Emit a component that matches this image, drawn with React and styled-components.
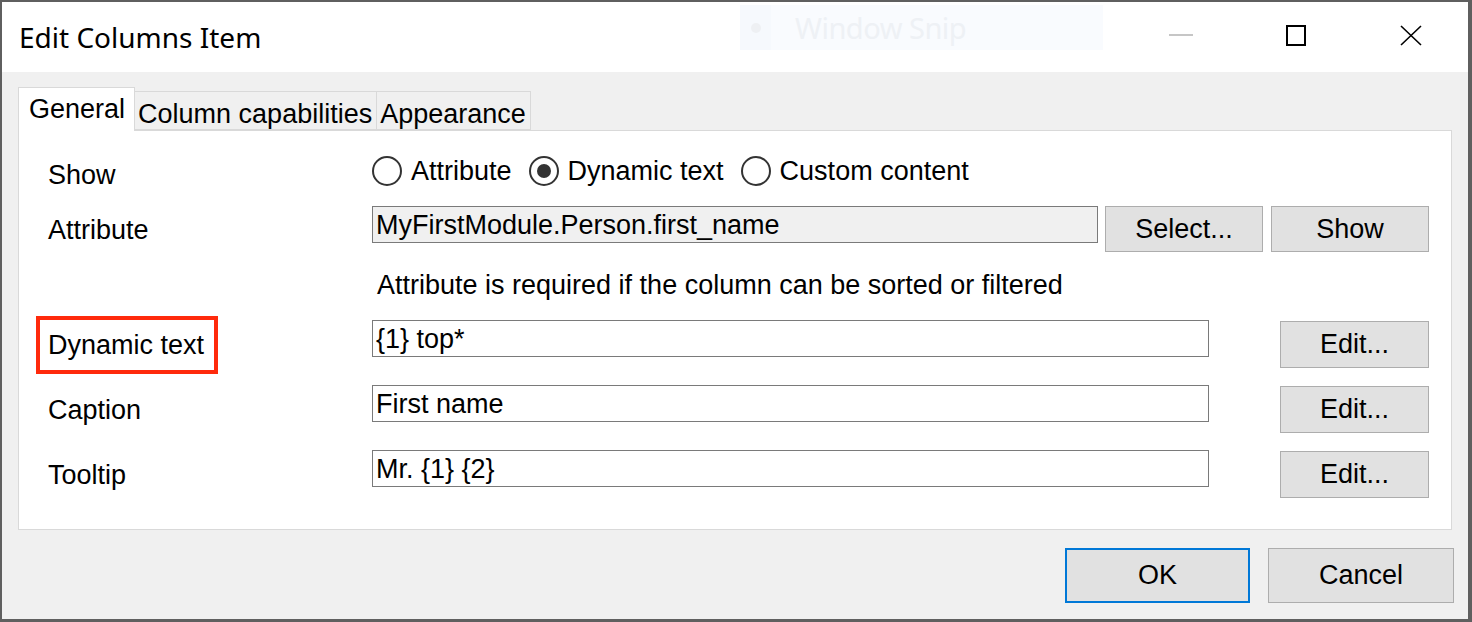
import React from 'react';
import styled, { createGlobalStyle } from 'styled-components';

const GlobalStyle = createGlobalStyle`
  html, body {
    margin: 0;
    padding: 0;
    background: #5f5f5f;
  }
  body {
    font-family: "Liberation Sans", Arial, sans-serif;
    overflow: hidden;
  }
`;

const Frame = styled.div`
  width: 1472px;
  height: 622px;
  padding: 2px 4px 3px 2px;
  box-sizing: border-box;
`;

const Window = styled.div`
  position: relative;
  width: 100%;
  height: 100%;
  background: #f0f0f0;
  display: flex;
  flex-direction: column;
`;

const TitleBar = styled.div`
  height: 70px;
  background: #ffffff;
  display: flex;
  align-items: center;
  flex-shrink: 0;
`;

const Title = styled.div`
  flex: 1;
  padding-left: 17px;
  font-family: "Noto Sans", "Open Sans", sans-serif;
  font-size: 28px;
  color: #000;
`;

const Controls = styled.div`
  display: flex;
  height: 100%;
`;

const CtrlButton = styled.div`
  width: 115px;
  height: 100%;
  display: flex;
  align-items: center;
  justify-content: center;
  padding-bottom: 4px;
  box-sizing: border-box;
`;

const Ghost = styled.div`
  position: absolute;
  left: 738px;
  top: 3px;
  width: 363px;
  height: 45px;
  background: #f9fbfe;
  display: flex;
  align-items: center;
`;

const GhostIcon = styled.div`
  width: 31px;
  height: 100%;
  background: #f6f9fd;
  display: flex;
  align-items: center;
  justify-content: center;
  &::after {
    content: "";
    width: 10px;
    height: 10px;
    border-radius: 50%;
    background: #eef0f3;
  }
`;

const GhostText = styled.span`
  margin-left: 24px;
  font-family: "Noto Sans", sans-serif;
  font-size: 29px;
  color: #eef1f5;
  letter-spacing: -0.5px;
`;

const Body = styled.div`
  flex: 1;
  display: flex;
  flex-direction: column;
  padding: 15px 12px 0 16px;
`;

const TabStrip = styled.div`
  display: flex;
  align-items: flex-end;
  height: 43px;
  position: relative;
  z-index: 1;
`;

const Tab = styled.div`
  box-sizing: border-box;
  height: ${p => (p.$active ? '44px' : '39px')};
  margin-bottom: ${p => (p.$active ? '-1px' : '0')};
  padding: ${p => (p.$active ? '0 9px 0 10px' : '0 4px 0 3px')};
  background: ${p => (p.$active ? '#ffffff' : '#f0f0f0')};
  border: 1px solid #d9d9d9;
  border-bottom: ${p => (p.$active ? 'none' : '1px solid #d9d9d9')};
  border-left: ${p => (p.$first || p.$active ? '1px solid #d9d9d9' : 'none')};
  font-size: 27px;
  line-height: ${p => (p.$active ? '42px' : '44px')};
  color: #000;
  white-space: nowrap;
`;

const Panel = styled.div`
  width: 1434px;
  height: 400px;
  box-sizing: border-box;
  background: #ffffff;
  border: 1px solid #d9d9d9;
  padding: 22px 22px 0 29px;
`;

const Row = styled.div`
  display: flex;
  height: ${p => p.$h}px;
  box-sizing: border-box;
`;

const Label = styled.div`
  width: 324px;
  flex-shrink: 0;
  padding-top: ${p => p.$top}px;
  font-size: 27px;
  line-height: 32px;
  color: #000;
`;

const Highlight = styled.span`
  display: inline-block;
  margin: -14px 0 0 -12px;
  padding: 9px 10px 9px 8px;
  border: 4px solid #ff2a0c;
`;

const Control = styled.div`
  flex: 1;
  display: flex;
  align-items: flex-start;
  justify-content: ${p => p.$spread ? 'space-between' : 'flex-start'};
  gap: ${p => p.$gap || 0}px;
`;

const Radios = styled.div`
  display: flex;
  align-self: flex-start;
  align-items: center;
  padding-top: 2px;
  gap: 17px;
`;

const RadioItem = styled.label`
  display: flex;
  align-items: center;
  gap: 9px;
  font-size: 27px;
  line-height: 32px;
  color: #000;
`;

const RadioCircle = styled.span`
  width: 30px;
  height: 30px;
  box-sizing: border-box;
  border-radius: 50%;
  border: 2px solid #333333;
  background: #fff;
  display: flex;
  align-items: center;
  justify-content: center;
  &::after {
    content: "";
    width: 14px;
    height: 14px;
    border-radius: 50%;
    background: ${p => (p.$checked ? '#333333' : 'transparent')};
  }
`;

const TextBox = styled.div`
  width: ${p => p.$w}px;
  height: 37px;
  box-sizing: border-box;
  border: 1px solid #7a7a7a;
  background: ${p => (p.$readonly ? '#f0f0f0' : '#ffffff')};
  padding-left: 3px;
  font-size: 27px;
  line-height: 37px;
  color: #000;
  white-space: nowrap;
  overflow: hidden;
`;

const Button = styled.div`
  width: ${p => p.$w}px;
  height: ${p => p.$h || 47}px;
  box-sizing: border-box;
  background: #e1e1e1;
  border: ${p => (p.$default ? '2px solid #0078d7' : '1px solid #adadad')};
  margin-top: ${p => p.$mt || 0}px;
  display: flex;
  align-items: center;
  justify-content: center;
  font-size: 27px;
  color: #000;
`;

const Hint = styled.div`
  padding: 17px 0 0 5px;
  font-size: 27px;
  line-height: 32px;
  color: #000;
`;

const Footer = styled.div`
  display: flex;
  justify-content: flex-end;
  gap: 18px;
  padding-top: 18px;
  margin-right: 2px;
`;

const Minimize = () => (
  <svg width="24" height="4" viewBox="0 0 24 4">
    <rect x="0" y="1" width="24" height="2" fill="#c6c6c6" />
  </svg>
);

const Maximize = () => (
  <svg width="20" height="21" viewBox="0 0 20 21">
    <rect x="1" y="1" width="18" height="19" fill="none" stroke="#000" strokeWidth="2" />
  </svg>
);

const Close = () => (
  <svg width="22" height="21" viewBox="0 0 22 21">
    <path d="M1 1 L21 20 M21 1 L1 20" stroke="#000" strokeWidth="1.6" fill="none" />
  </svg>
);

const Radio = ({ checked, children }) => (
  <RadioItem>
    <RadioCircle $checked={checked} />
    {children}
  </RadioItem>
);

const editRows = [
  { label: 'Dynamic text', value: '{1} top*', highlight: true },
  { label: 'Caption', value: 'First name' },
  { label: 'Tooltip', value: 'Mr. {1} {2}' },
];

export default function App() {
  return (
    <Frame>
      <GlobalStyle />
      <Window>
        <TitleBar>
          <Title>Edit Columns Item</Title>
          <Controls>
            <CtrlButton><Minimize /></CtrlButton>
            <CtrlButton><Maximize /></CtrlButton>
            <CtrlButton><Close /></CtrlButton>
          </Controls>
        </TitleBar>
        <Ghost>
          <GhostIcon />
          <GhostText>Window Snip</GhostText>
        </Ghost>

        <Body>
          <TabStrip>
            <Tab $active>General</Tab>
            <Tab>Column capabilities</Tab>
            <Tab>Appearance</Tab>
          </TabStrip>
          <Panel>
            <Row $h={53}>
              <Label $top={6}>Show</Label>
              <Radios>
                <Radio>Attribute</Radio>
                <Radio checked>Dynamic text</Radio>
                <Radio>Custom content</Radio>
              </Radios>
            </Row>
            <Row $h={46}>
              <Label $top={8}>Attribute</Label>
              <Control $gap={7}>
                <TextBox $w={726} $readonly>MyFirstModule.Person.first_name</TextBox>
                <Button $w={158} $h={46}>Select...</Button>
                <Button $w={158} $h={46} style={{ marginLeft: 1 }}>Show</Button>
              </Control>
            </Row>
            <Row $h={68}>
              <Label />
              <Hint>Attribute is required if the column can be sorted or filtered</Hint>
            </Row>
            {editRows.map(r => (
              <Row $h={65} key={r.label}>
                <Label $top={9}>
                  {r.highlight ? <Highlight>{r.label}</Highlight> : r.label}
                </Label>
                <Control $spread>
                  <TextBox $w={837}>{r.value}</TextBox>
                  <Button $w={149} $mt={1}>Edit...</Button>
                </Control>
              </Row>
            ))}
          </Panel>
          <Footer>
            <Button $w={185} $h={55} $default>OK</Button>
            <Button $w={186} $h={55}>Cancel</Button>
          </Footer>
        </Body>
      </Window>
    </Frame>
  );
}
